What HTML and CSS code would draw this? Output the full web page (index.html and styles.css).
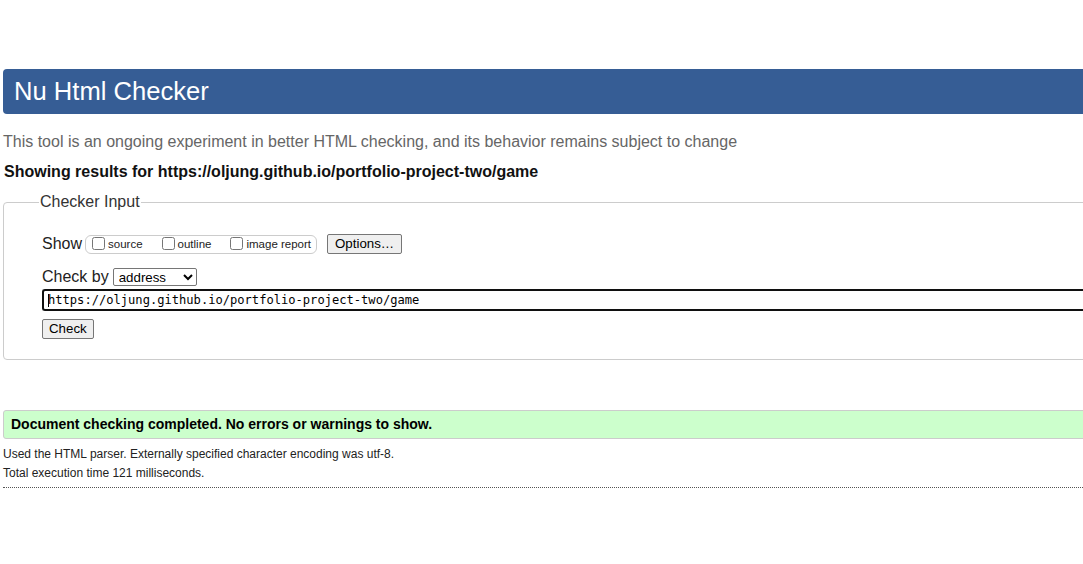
FILE: index.html
```html
<!DOCTYPE html>
<html lang="en">
<head>
<meta charset="utf-8">
<title>Showing results for https://oljung.github.io/portfolio-project-two/game - Nu Html Checker</title>
<link rel="stylesheet" href="styles.css">
</head>
<body>
<div class="page">
  <h1 class="banner">Nu Html Checker</h1>
  <p class="tagline">This tool is an ongoing experiment in better HTML checking, and its behavior remains subject to change</p>
  <p class="showing">Showing results for https://oljung.github.io/portfolio-project-two/game</p>
  <fieldset class="input-box">
    <legend class="legend">Checker Input</legend>
    <div class="row show-row">
      <span class="label">Show</span>
      <span class="opts">
        <label class="opt"><input type="checkbox" class="cb"><span>source</span></label>
        <label class="opt"><input type="checkbox" class="cb"><span>outline</span></label>
        <label class="opt"><input type="checkbox" class="cb"><span>image report</span></label>
      </span>
      <button class="btn options-btn" type="button">Options…</button>
    </div>
    <div class="row checkby-row">
      <span class="label">Check by</span>
      <select class="sel"><option>address</option></select>
    </div>
    <div class="url"><span class="caret"></span>https://oljung.github.io/portfolio-project-two/game</div>
    <div class="row">
      <button class="btn" type="button">Check</button>
    </div>
  </fieldset>
  <p class="success">Document checking completed. No errors or warnings to show.</p>
  <p class="details">Used the HTML parser. Externally specified character encoding was utf-8.</p>
  <p class="details">Total execution time 121 milliseconds.</p>
  <div class="rule"></div>
</div>
</body>
</html>
```
FILE: styles.css
```css
html, body {
  margin: 0;
  padding: 0;
  overflow: hidden;
  background: #fff;
}
body {
  font-family: "Liberation Sans", Arial, sans-serif;
  color: #222;
}
.page {
  width: 1110px;
  padding: 69px 0 0 3px;
}
.banner {
  margin: 0;
  height: 45px;
  box-sizing: border-box;
  padding: 7px 0 0 11px;
  background: #365d95;
  color: #fff;
  font-size: 25.6px;
  font-weight: normal;
  line-height: 30px;
  border-radius: 4px;
}
.tagline {
  margin: 18px 0 0;
  font-size: 16px;
  line-height: 20px;
  color: #666;
}
.showing {
  margin: 10px 0 0 1px;
  font-size: 16px;
  line-height: 20px;
  font-weight: bold;
  color: #111;
}
.input-box {
  margin: 11px 0 0;
  border: 1px solid #ccc;
  border-radius: 4px;
  padding: 23px 0 20px 38px;
}
.legend {
  margin-left: -3px;
  padding: 0 1px;
  font-size: 16px;
  color: #333;
}
.row {
  display: flex;
  align-items: center;
}
.label {
  font-size: 16px;
  color: #222;
}
.show-row {
  height: 20px;
}
.opts {
  display: flex;
  align-items: center;
  margin-left: 3px;
  height: 17px;
  border: 1px solid #ccc;
  border-radius: 6px;
  padding: 0 5px 0 6px;
  font-size: 11.5px;
}
.opt {
  display: flex;
  align-items: center;
  margin-right: 19px;
}
.opt:last-child {
  margin-right: 0;
}
.cb {
  width: 13px;
  height: 13px;
  margin: 0 3px 0 0;
  position: relative;
  top: -1px;
}
.btn {
  font-family: "Liberation Sans", Arial, sans-serif;
  font-size: 13.3px;
  height: 20px;
  padding: 0 6px;
  border: 1px solid #767676;
  border-radius: 2px;
  background: #efefef;
  color: #000;
  line-height: 18px;
}
.options-btn {
  margin-left: 10px;
  padding: 0 7px;
}
.checkby-row {
  margin-top: 13px;
  height: 20px;
}
.sel {
  margin-left: 4px;
  width: 84px;
  height: 18px;
  font-family: "Liberation Sans", Arial, sans-serif;
  font-size: 13.3px;
  border: 1px solid #767676;
  border-radius: 2px;
  background: #fff;
  color: #000;
  padding: 0 0 0 1px;
}
.url {
  margin-top: 2px;
  height: 22px;
  box-sizing: border-box;
  border: 2px solid #101010;
  border-right: 0;
  border-radius: 3px 0 0 3px;
  padding: 0 0 0 4px;
  font-family: "DejaVu Sans Mono", monospace;
  font-size: 12.1px;
  line-height: 18px;
  color: #000;
  display: flex;
  align-items: center;
  white-space: nowrap;
}
.caret {
  width: 1px;
  height: 13px;
  background: #000;
  margin-right: -1px;
}
.input-box .row:last-child {
  margin-top: 8px;
}
.success {
  margin: 50px 0 0;
  height: 29px;
  box-sizing: border-box;
  background: #ccffcc;
  border: 1px solid #ccc;
  border-radius: 3px;
  padding: 0 0 0 7px;
  font-size: 14px;
  font-weight: bold;
  line-height: 27px;
  color: #000;
}
.details {
  margin: 0;
  font-size: 12px;
  line-height: 19px;
  color: #222;
}
.success + .details {
  margin-top: 6px;
}
.rule {
  margin-top: 4px;
  border-bottom: 1px dotted #555;
}
```
